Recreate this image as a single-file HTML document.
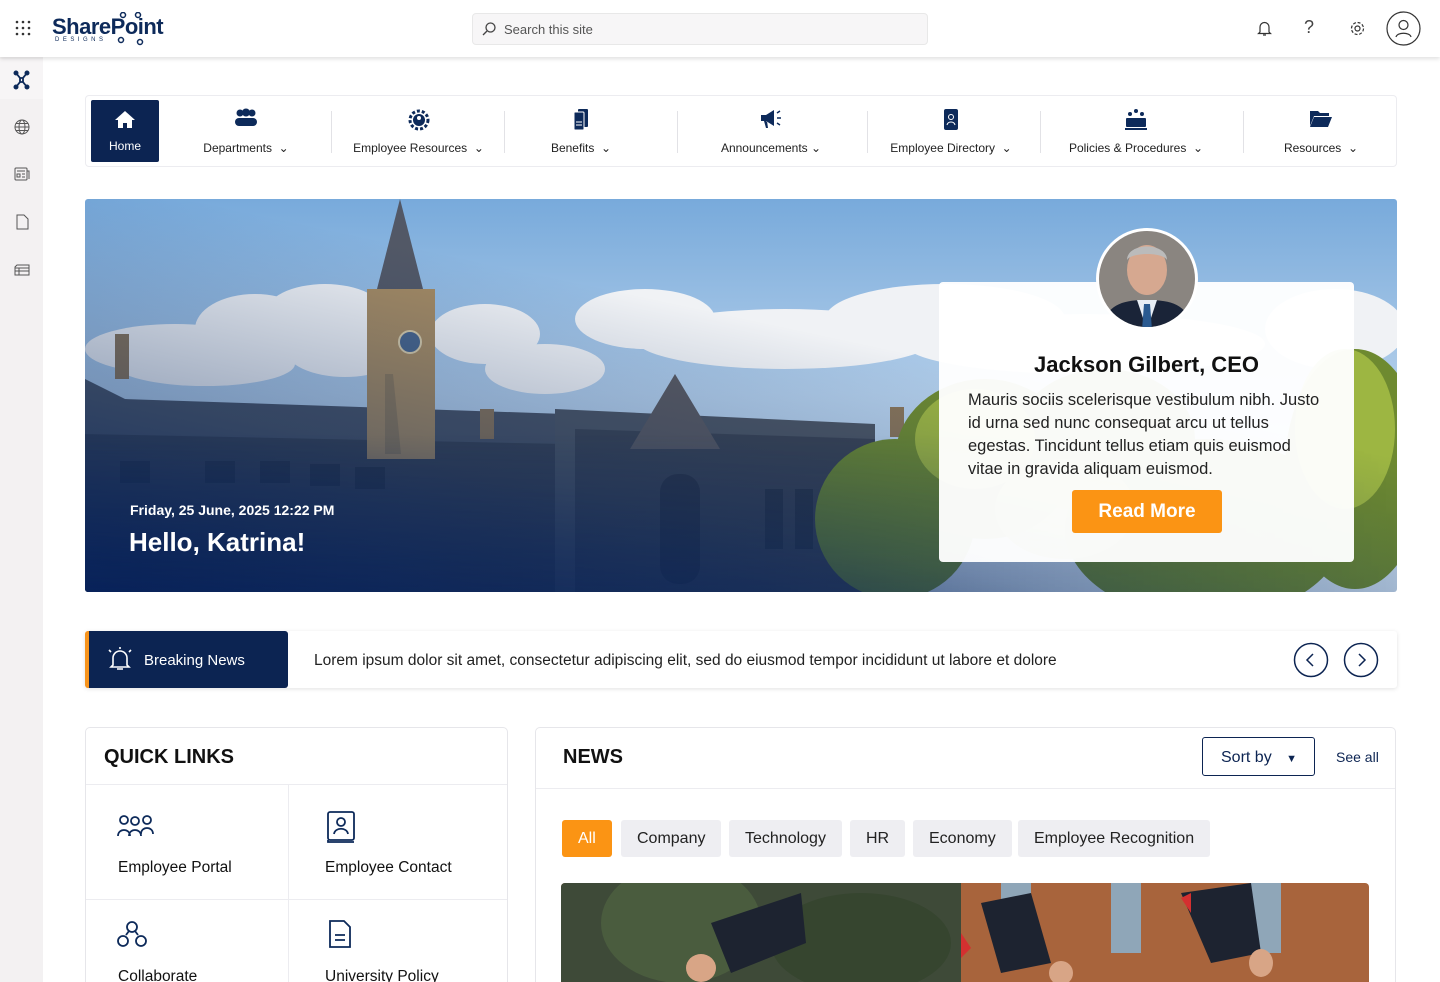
<!DOCTYPE html>
<html><head><meta charset="utf-8"><style>
*{box-sizing:border-box;margin:0;padding:0}
html,body{width:1440px;height:982px;overflow:hidden}
body{background:#fff;font-family:"Liberation Sans","DejaVu Sans",sans-serif;color:#111;position:relative}
.top{position:absolute;left:0;top:0;width:1440px;height:57px;background:#fff;box-shadow:0 2px 4px rgba(0,0,0,.12);z-index:5}
.rail{position:absolute;left:0;top:57px;width:43px;height:925px;background:#f3f1f2}
.search{position:absolute;left:472px;top:13px;width:456px;height:32px;background:#f7f6f7;border:1px solid #e8e8e8;border-radius:4px;font-size:13px;color:#555;padding:8px 0 0 31px}
.nav{position:absolute;left:85px;top:95px;width:1312px;height:72px;border:1px solid #ececf0;border-radius:4px;background:#fff}
.ni{position:absolute;top:0;height:72px;text-align:center;font-size:12px;color:#222}
.ni svg{position:absolute;top:12px;left:50%;margin-left:-12px}
.ni span{position:absolute;top:45px;left:0;right:0;white-space:nowrap}
.sep{position:absolute;top:15px;width:1px;height:42px;background:#e2e2e6}
.hero{position:absolute;left:85px;top:199px;width:1312px;height:393px;border-radius:3px;overflow:hidden}
.card{position:absolute;left:939px;top:282px;width:415px;height:280px;background:rgba(255,255,255,.96);border-radius:4px}
.bn{position:absolute;left:85px;top:631px;width:1312px;height:57px;background:#fff;box-shadow:0 1px 4px rgba(0,0,0,.12);border-radius:3px}
.panel{position:absolute;top:727px;border:1px solid #e6e6ea;border-radius:5px;background:#fff;height:270px}
.chip{position:absolute;top:820px;height:37px;background:#eeeef2;border-radius:3px;font-size:16px;color:#222;padding:10px 16px 0;white-space:nowrap}
.ql{position:absolute;font-size:15.5px;color:#111}
</style></head><body>
<div class="top">
 <svg style="position:absolute;left:15px;top:20px" width="16" height="16" fill="#333"><circle cx="2" cy="2" r="1.3"/><circle cx="8" cy="2" r="1.3"/><circle cx="14" cy="2" r="1.3"/><circle cx="2" cy="8" r="1.3"/><circle cx="8" cy="8" r="1.3"/><circle cx="14" cy="8" r="1.3"/><circle cx="2" cy="14" r="1.3"/><circle cx="8" cy="14" r="1.3"/><circle cx="14" cy="14" r="1.3"/></svg>
 <div style="position:absolute;left:52px;top:14px;font-size:22px;font-weight:bold;color:#0d2a5a;letter-spacing:-.5px">SharePoint</div>
 <div style="position:absolute;left:55px;top:37px;font-size:6px;letter-spacing:3.5px;color:#0d2a5a">DESIGNS</div>
 <svg style="position:absolute;left:116px;top:12px" width="30" height="34" fill="none" stroke="#0d2a5a" stroke-width="1.5"><circle cx="7" cy="3" r="2.5"/><circle cx="22" cy="3" r="2.5"/><circle cx="5" cy="28" r="2.5"/><circle cx="24" cy="30" r="2.5"/></svg>
 <div class="search">Search this site</div>
 <svg style="position:absolute;left:482px;top:22px" width="14" height="14" fill="none" stroke="#444" stroke-width="1.3"><circle cx="8.5" cy="5.5" r="4.5"/><path d="M5 9 1 13"/></svg>
 <svg style="position:absolute;left:1257px;top:20px" width="15" height="17" fill="none" stroke="#333" stroke-width="1.2"><path d="M3 12V7a4.5 4.5 0 0 1 9 0v5l1.5 1.5h-12zM6 15h3"/></svg>
 <div style="position:absolute;left:1304px;top:17px;font-size:18px;color:#444">?</div>
 <svg style="position:absolute;left:1349px;top:20px" width="17" height="17" fill="none" stroke="#333" stroke-width="1.2"><circle cx="8.5" cy="8.5" r="2.5"/><circle cx="8.5" cy="8.5" r="6" stroke-dasharray="3 1.7"/></svg>
 <svg style="position:absolute;left:1386px;top:11px" width="35" height="35" fill="none" stroke="#333" stroke-width="1.2"><circle cx="17.5" cy="17.5" r="16.5"/><circle cx="17.5" cy="14" r="4.5"/><path d="M10 26c1-5 14-5 15 0"/></svg>
</div>
<div class="rail">
 <div style="position:absolute;left:0;top:2px;width:43px;height:40px;background:#f7f5f6"></div>
 <svg style="position:absolute;left:13px;top:13px" width="17" height="20" fill="none" stroke="#0d2a5a" stroke-width="1.8"><path d="M3 3 7 8v4l-4 5M14 3l-4 5v4l4 5M7 8h3M7 12h3"/><circle cx="3" cy="3" r="1.6" fill="#0d2a5a"/><circle cx="14" cy="3" r="1.6" fill="#0d2a5a"/><circle cx="3" cy="17" r="1.6" fill="#0d2a5a"/><circle cx="14" cy="17" r="1.6" fill="#0d2a5a"/></svg>
 <svg style="position:absolute;left:14px;top:62px" width="16" height="16" fill="none" stroke="#555" stroke-width="1"><circle cx="8" cy="8" r="7"/><ellipse cx="8" cy="8" rx="3" ry="7"/><path d="M1 8h14M2 4.5h12M2 11.5h12"/></svg>
 <svg style="position:absolute;left:14px;top:110px" width="16" height="14" fill="none" stroke="#555" stroke-width="1"><rect x="1" y="1" width="12" height="12" rx="1"/><path d="M13 4h2v8M3 4h8M3 7h3v3H3zM8 7h3M8 10h3"/></svg>
 <svg style="position:absolute;left:16px;top:157px" width="13" height="16" fill="none" stroke="#555" stroke-width="1"><path d="M1 1h7l4 4v10H1z"/></svg>
 <svg style="position:absolute;left:14px;top:205px" width="16" height="16" fill="none" stroke="#555" stroke-width="1"><path d="M3 3h12v10H1V5zM1 6h14M1 9h14M5 6v7"/></svg>
</div>

<div class="nav">
 <div style="position:absolute;left:5px;top:4px;width:68px;height:62px;background:#0c2452;border-radius:2px;color:#fff;font-size:12px;text-align:center">
  <svg style="position:absolute;left:24px;top:10px" width="20" height="19" fill="#fff"><path d="M10 1 0 10h3v8h5v-5h4v5h5v-8h3z"/></svg>
  <span style="position:absolute;top:39px;left:0;right:0">Home</span></div>
 <div class="ni" style="left:100px;width:120px"><svg width="24" height="20" fill="#0d2a5a"><circle cx="6" cy="5" r="3.5"/><circle cx="12" cy="4.5" r="4"/><circle cx="18" cy="5" r="3.5"/><rect x="1" y="10" width="22" height="8" rx="4"/></svg><span>Departments &nbsp;⌄</span></div>
 <div class="sep" style="left:245px"></div>
 <div class="ni" style="left:255px;width:155px"><svg width="24" height="24" fill="#0d2a5a"><circle cx="12" cy="12" r="9" stroke="#0d2a5a" stroke-width="3" stroke-dasharray="3 2" fill="none"/><circle cx="12" cy="12" r="6"/><circle cx="12" cy="10" r="2" fill="#fff"/></svg><span>Employee Resources &nbsp;⌄</span></div>
 <div class="sep" style="left:418px"></div>
 <div class="ni" style="left:440px;width:110px"><svg width="24" height="24" fill="#0d2a5a"><rect x="9" y="1" width="10" height="18" rx="1"/><rect x="5" y="4" width="10" height="18" rx="1" stroke="#fff" stroke-width="1"/><path d="M7 14h6M7 17h6" stroke="#fff"/></svg><span>Benefits &nbsp;⌄</span></div>
 <div class="sep" style="left:591px"></div>
 <div class="ni" style="left:620px;width:130px"><svg width="24" height="22" fill="#0d2a5a"><path d="M2 7h5l8-5v16l-8-5H2zM5 13l2 7h2l-1-7"/><path d="M18 5l3-2M18 10h4M18 15l3 2" stroke="#0d2a5a" stroke-width="1.5"/></svg><span>Announcements ⌄</span></div>
 <div class="sep" style="left:781px"></div>
 <div class="ni" style="left:795px;width:140px"><svg width="24" height="24" fill="#0d2a5a"><rect x="5" y="1" width="14" height="21" rx="2"/><circle cx="12" cy="9" r="2.5" fill="none" stroke="#fff"/><path d="M8 17c1-4 7-4 8 0" stroke="#fff" fill="none"/></svg><span>Employee Directory &nbsp;⌄</span></div>
 <div class="sep" style="left:954px"></div>
 <div class="ni" style="left:975px;width:150px"><svg width="24" height="24" fill="#0d2a5a"><circle cx="12" cy="3" r="2"/><circle cx="6" cy="6" r="2"/><circle cx="18" cy="6" r="2"/><rect x="2" y="10" width="20" height="9" rx="1"/><rect x="1" y="20" width="22" height="2"/></svg><span>Policies &amp; Procedures &nbsp;⌄</span></div>
 <div class="sep" style="left:1157px"></div>
 <div class="ni" style="left:1180px;width:110px"><svg width="24" height="22" fill="#0d2a5a"><path d="M1 3h8l2 2h9v3H5L1 18z"/><path d="M5 9h18l-4 10H1z"/></svg><span>Resources &nbsp;⌄</span></div>
</div>

<div class="hero">
<svg width="1312" height="393" viewBox="0 0 1312 393">
 <defs>
  <linearGradient id="sky" x1="0" y1="0" x2="0" y2="1"><stop offset="0" stop-color="#78aadb"/><stop offset=".5" stop-color="#b4cfea"/><stop offset="1" stop-color="#cddff0"/></linearGradient>
  <linearGradient id="ov" x1="0" y1="1" x2=".5" y2=".3"><stop offset="0" stop-color="#06215a" stop-opacity=".9"/><stop offset=".5" stop-color="#0b2a5e" stop-opacity=".35"/><stop offset="1" stop-color="#0b2a5e" stop-opacity="0"/></linearGradient>
  <linearGradient id="ov2" x1="0" y1="0" x2="1" y2="0"><stop offset="0" stop-color="#06215a" stop-opacity=".6"/><stop offset=".5" stop-color="#06215a" stop-opacity=".35"/><stop offset="1" stop-color="#06215a" stop-opacity="0"/></linearGradient>
  <linearGradient id="ovm" x1="0" y1="0" x2="0" y2="1"><stop offset="0" stop-color="#fff"/><stop offset=".55" stop-color="#000"/><stop offset="1" stop-color="#fff"/></linearGradient>
  <linearGradient id="vb" x1="0" y1="0" x2="0" y2="1"><stop offset=".6" stop-color="#fff" stop-opacity="0"/><stop offset="1" stop-color="#fff" stop-opacity="1"/></linearGradient>
  <mask id="m"><rect width="1312" height="393" fill="url(#vb)"/></mask>
 </defs>
 <rect width="1312" height="393" fill="url(#sky)"/>
 <g fill="#f0f2f5">
  <ellipse cx="90" cy="150" rx="90" ry="25"/><ellipse cx="170" cy="130" rx="60" ry="35"/><ellipse cx="120" cy="165" rx="90" ry="22"/>
  <ellipse cx="240" cy="115" rx="60" ry="30"/><ellipse cx="260" cy="150" rx="60" ry="28"/>
  <ellipse cx="400" cy="135" rx="55" ry="30"/><ellipse cx="460" cy="170" rx="60" ry="25"/>
  <ellipse cx="560" cy="120" rx="70" ry="30"/><ellipse cx="700" cy="140" rx="150" ry="30"/><ellipse cx="860" cy="120" rx="120" ry="35"/><ellipse cx="1000" cy="145" rx="180" ry="30"/><ellipse cx="1250" cy="130" rx="70" ry="40"/>
 </g>
 <path d="M0 180 40 200 480 215 480 393 0 393z" fill="#4a5465"/>
 <path d="M0 235 480 245 480 393 0 393z" fill="#3b4352"/>
 <path d="M470 210 790 225 790 393 470 393z" fill="#4d5663"/>
 <path d="M490 230 790 240 790 393 490 393z" fill="#3c4452"/>
 <path d="M282 90h68v170h-68z" fill="#a48a62"/>
 <path d="M292 90 315 0 338 90z" fill="#525866"/>
 <circle cx="325" cy="143" r="11" fill="#49658a" stroke="#d6caa8" stroke-width="2"/>
 <path d="M300 175l8 0 8 80h-16z" fill="#8e7a5a"/>
 <path d="M545 250 590 175 635 250z" fill="#5a5a60"/>
 <path d="M30 135h14v45H30zM395 210h14v30h-14zM805 208h14v30h-14z" fill="#8a7558"/>
 <g fill="#2a3342" opacity=".8">
  <rect x="35" y="262" width="30" height="22"/><rect x="120" y="262" width="30" height="22"/><rect x="175" y="262" width="30" height="22"/><rect x="225" y="265" width="30" height="22"/><rect x="270" y="268" width="30" height="22"/>
  <rect x="575" y="275" width="40" height="110" rx="18"/><rect x="680" y="290" width="18" height="60"/><rect x="710" y="290" width="18" height="60"/><rect x="740" y="290" width="18" height="60"/>
 </g>
 <g fill="#6e8a30">
  <ellipse cx="810" cy="320" rx="80" ry="80"/><ellipse cx="900" cy="260" rx="90" ry="80"/><ellipse cx="1020" cy="240" rx="90" ry="70"/><ellipse cx="1120" cy="330" rx="140" ry="90"/><ellipse cx="1270" cy="270" rx="70" ry="120"/>
 </g>
 <g fill="#a6bd45" opacity=".85"><ellipse cx="890" cy="240" rx="60" ry="50"/><ellipse cx="1260" cy="230" rx="50" ry="80"/><ellipse cx="980" cy="310" rx="70" ry="50"/></g>
 <rect width="1312" height="393" fill="url(#ov)"/>
 <rect width="1312" height="393" fill="url(#ov2)" mask="url(#m)"/>
 <text x="45" y="316" fill="#fff" font-size="14" font-weight="bold" font-family="Liberation Sans">Friday, 25 June, 2025  12:22 PM</text>
 <text x="44" y="352" fill="#fff" font-size="26" font-weight="bold" font-family="Liberation Sans">Hello, Katrina!</text>
</svg>
</div>
<div class="card">
 <div style="position:absolute;top:70px;left:0;right:0;text-align:center;font-size:22px;font-weight:bold">Jackson Gilbert, CEO</div>
 <div style="position:absolute;top:107px;left:29px;width:360px;font-size:16.5px;line-height:23px;color:#222">Mauris sociis scelerisque vestibulum nibh. Justo id urna sed nunc consequat arcu ut tellus egestas. Tincidunt tellus etiam quis euismod vitae in gravida aliquam euismod.</div>
 <div style="position:absolute;top:208px;left:133px;width:150px;height:43px;background:#fb9414;border-radius:3px;color:#fff;font-weight:bold;font-size:19px;text-align:center;padding-top:11px">Read More</div>
</div>
<svg style="position:absolute;left:1096px;top:228px" width="102" height="102"><defs><clipPath id="cc"><circle cx="51" cy="51" r="48"/></clipPath></defs><circle cx="51" cy="51" r="51" fill="#fff"/><g clip-path="url(#cc)"><rect width="102" height="102" fill="#8a8580"/><ellipse cx="51" cy="42" rx="20" ry="25" fill="#d6a890"/><path d="M31 32c0-18 40-18 40 0-4-8-36-8-40 0z" fill="#bbb"/><path d="M5 102c5-25 20-30 46-30s41 5 46 30z" fill="#1a2438"/><path d="M41 72h20l-10 30z" fill="#e8eef5"/><path d="M48 76h6l2 26h-10z" fill="#2a5a90"/></g></svg>

<div class="bn">
 <div style="position:absolute;left:0;top:0;width:203px;height:57px;background:#0c2452;border-left:4px solid #f7941d;border-radius:3px;color:#fff;font-size:15px">
  <svg style="position:absolute;left:19px;top:15px" width="24" height="27" fill="none" stroke="#fff" stroke-width="1.6"><path d="M5 19V12a7 7 0 0 1 14 0v7l2 2H3zM9 23h6M12 3V1M3 6 1 4M21 6l2-2"/></svg>
  <span style="position:absolute;left:55px;top:21px">Breaking News</span></div>
 <div style="position:absolute;left:229px;top:21px;font-size:15.5px;color:#222">Lorem ipsum dolor sit amet, consectetur adipiscing elit, sed do eiusmod tempor incididunt ut labore et dolore</div>
 <svg style="position:absolute;left:1208px;top:11px" width="36" height="36" fill="none" stroke="#0c2452" stroke-width="1.5"><circle cx="18" cy="18" r="16.5"/><path d="M20 12l-6 6 6 6"/></svg>
 <svg style="position:absolute;left:1258px;top:11px" width="36" height="36" fill="none" stroke="#0c2452" stroke-width="1.5"><circle cx="18" cy="18" r="16.5"/><path d="M16 12l6 6-6 6"/></svg>
</div>

<div class="panel" style="left:85px;width:423px">
 <div style="position:absolute;left:18px;top:18px;font-size:20px;font-weight:bold">QUICK LINKS</div>
 <div style="position:absolute;left:0;right:0;top:56px;height:1px;background:#ececf0"></div>
 <div style="position:absolute;left:202px;top:57px;width:1px;height:220px;background:#ececf0"></div>
 <div style="position:absolute;left:0;right:0;top:171px;height:1px;background:#ececf0"></div>
</div>
<svg style="position:absolute;left:117px;top:814px" width="38" height="24" fill="none" stroke="#0d2a5a" stroke-width="1.8"><circle cx="7" cy="6" r="4"/><circle cx="18" cy="7" r="4"/><circle cx="30" cy="6" r="4"/><path d="M1 22c0-8 12-8 12 0M12 22c0-8 12-8 12 0M24 20c0-8 12-8 12 0"/></svg>
<div class="ql" style="left:118px;top:859px">Employee Portal</div>
<svg style="position:absolute;left:327px;top:811px" width="29" height="33" fill="none" stroke="#0d2a5a" stroke-width="1.8"><rect x="1" y="1" width="26" height="28" rx="2"/><path d="M1 29v2h26"/><circle cx="14" cy="11" r="4"/><path d="M7 23c1-7 13-7 14 0"/></svg>
<div class="ql" style="left:325px;top:859px">Employee Contact</div>
<svg style="position:absolute;left:117px;top:920px" width="30" height="28" fill="none" stroke="#0d2a5a" stroke-width="1.8"><circle cx="15" cy="7" r="5"/><circle cx="6" cy="21" r="5"/><circle cx="24" cy="21" r="5"/><path d="M9 15l3-4M21 15l-3-4"/></svg>
<div class="ql" style="left:118px;top:968px">Collaborate</div>
<svg style="position:absolute;left:329px;top:920px" width="23" height="28" fill="none" stroke="#0d2a5a" stroke-width="1.8"><path d="M1 1h14l6 6v20H1z"/><path d="M6 15h10M6 20h10"/></svg>
<div class="ql" style="left:325px;top:968px">University Policy</div>

<div class="panel" style="left:535px;width:861px">
 <div style="position:absolute;left:27px;top:18px;font-size:20px;font-weight:bold">NEWS</div>
 <div style="position:absolute;left:666px;top:9px;width:113px;height:39px;border:1.5px solid #0c2452;border-radius:3px;font-size:16px;color:#0c2452;padding:11px 0 0 18px">Sort by <span style="font-size:11px;margin-left:10px">▼</span></div>
 <div style="position:absolute;left:800px;top:21px;font-size:14px;color:#0c2452">See all</div>
 <div style="position:absolute;left:0;right:0;top:60px;height:1px;background:#ececf0"></div>
</div>
<div class="chip" style="left:562px;width:50px;background:#fb9414;color:#fff">All</div>
<div class="chip" style="left:621px">Company</div>
<div class="chip" style="left:729px">Technology</div>
<div class="chip" style="left:850px">HR</div>
<div class="chip" style="left:913px">Economy</div>
<div class="chip" style="left:1018px">Employee Recognition</div>
<svg style="position:absolute;left:561px;top:883px;border-radius:4px 4px 0 0" width="808" height="99">
 <rect width="808" height="99" fill="#a8643c"/>
 <rect width="400" height="99" fill="#3e4a38"/>
 <ellipse cx="120" cy="40" rx="80" ry="60" fill="#4a5c3e"/><ellipse cx="300" cy="60" rx="90" ry="50" fill="#36452f"/>
 <g fill="#8fa6b8"><rect x="440" y="0" width="30" height="70"/><rect x="550" y="0" width="30" height="70"/><rect x="690" y="0" width="30" height="70"/></g>
 <path d="M150 40 240 10 245 60 170 90z" fill="#1d2330"/><path d="M420 20 470 10 490 80 440 90z" fill="#1d2330"/><path d="M620 10 690 0 700 70 650 80z" fill="#1d2330"/>
 <ellipse cx="140" cy="85" rx="15" ry="14" fill="#d8a586"/><ellipse cx="500" cy="90" rx="12" ry="12" fill="#d8a586"/><ellipse cx="700" cy="80" rx="12" ry="14" fill="#d8a586"/>
 <path d="M400 50l10 15-10 10z" fill="#d43030"/><path d="M620 15l10-5v20z" fill="#d43030"/>
</svg>
</body></html>
